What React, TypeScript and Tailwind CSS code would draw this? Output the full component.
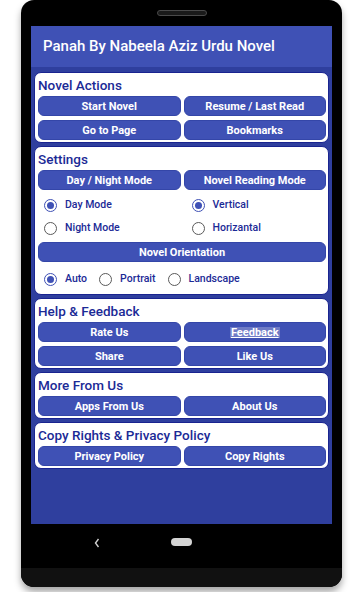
import React from "react";

const font = { fontFamily: "Roboto, 'Noto Sans', Arial, sans-serif" };

function Btn({ children, u }: { children: React.ReactNode; u?: boolean }) {
  return (
    <div className="h-[20px] rounded-[6px] bg-[#3F51B5] border border-[#3446a8] flex items-center justify-center text-white text-[11px] font-bold leading-none">
      {u ? <span className="underline bg-[#6f7bc6] px-[1px]">{children}</span> : children}
    </div>
  );
}

function Radio({ on, label, className = "" }: { on?: boolean; label: string; className?: string }) {
  return (
    <div className={"flex items-center " + className}>
      <div
        className={
          "w-[13px] h-[13px] rounded-full border-[1.5px] flex items-center justify-center shrink-0 " +
          (on ? "border-[#3F51B5]" : "border-[#5a5a5a]")
        }
      >
        {on && <div className="w-[7px] h-[7px] rounded-full bg-[#3F51B5]" />}
      </div>
      <span className="ml-[8px] text-[10.5px] font-medium text-[#1B2A96] leading-none">{label}</span>
    </div>
  );
}

function Card({ title, children }: { title: string; children: React.ReactNode }) {
  return (
    <div className="bg-white rounded-[7px] border border-[#1a2490] pl-[3px] pr-[2px] pt-[1px] pb-[2px]">
      <div className="h-[22px] leading-[22px] text-[13.5px] font-medium text-[#1B2A96]">{title}</div>
      {children}
    </div>
  );
}

export default function App() {
  return (
    <div className="w-[363px] h-[592px] bg-white overflow-hidden" style={font}>
      <div className="ml-[21px] w-[321px] h-[587px] bg-black rounded-[13px] shadow-[0_5px_7px_rgba(0,0,0,0.35)] flex flex-col overflow-hidden">
        <div className="h-[26px] flex justify-center pt-[10px]">
          <div className="w-[50px] h-[6px] rounded-full bg-[#1a1a1a] border border-[#4a4a4a]" />
        </div>
        <div className="mx-[10px] w-[301px] h-[498px] flex flex-col">
          <div className="h-[41px] bg-[#3F51B5] px-[12px] flex items-center text-white text-[15px] font-medium">
            Panah By Nabeela Aziz Urdu Novel
          </div>
          <div className="flex-1 bg-[#2F3F9E] px-[3px] pt-[5px] flex flex-col gap-[3px]">
            <Card title="Novel Actions">
              <div className="grid grid-cols-2 gap-x-[3px] gap-y-[4px]">
                <Btn>Start Novel</Btn>
                <Btn>Resume / Last Read</Btn>
                <Btn>Go to Page</Btn>
                <Btn>Bookmarks</Btn>
              </div>
            </Card>
            <Card title="Settings">
              <div className="grid grid-cols-2 gap-x-[3px]">
                <Btn>Day / Night Mode</Btn>
                <Btn>Novel Reading Mode</Btn>
              </div>
              <div className="grid grid-cols-2 gap-x-[3px] mt-[4px]">
                <Radio on label="Day Mode" className="h-[23px] pl-[6px]" />
                <Radio on label="Vertical" className="h-[23px] pl-[8px]" />
                <Radio label="Night Mode" className="h-[23px] pl-[6px]" />
                <Radio label="Horizantal" className="h-[23px] pl-[8px]" />
              </div>
              <div className="mt-[2px]">
                <Btn>Novel Orientation</Btn>
              </div>
              <div className="mt-[4px] h-[26px] flex items-center pl-[6px] gap-[12px]">
                <Radio on label="Auto" />
                <Radio label="Portrait" />
                <Radio label="Landscape" />
              </div>
            </Card>
            <Card title="Help & Feedback">
              <div className="grid grid-cols-2 gap-x-[3px] gap-y-[4px]">
                <Btn>Rate Us</Btn>
                <Btn u>Feedback</Btn>
                <Btn>Share</Btn>
                <Btn>Like Us</Btn>
              </div>
            </Card>
            <Card title="More From Us">
              <div className="grid grid-cols-2 gap-x-[3px]">
                <Btn>Apps From Us</Btn>
                <Btn>About Us</Btn>
              </div>
            </Card>
            <Card title="Copy Rights & Privacy Policy">
              <div className="grid grid-cols-2 gap-x-[3px]">
                <Btn>Privacy Policy</Btn>
                <Btn>Copy Rights</Btn>
              </div>
            </Card>
          </div>
        </div>
        <div className="h-[44px] relative">
          <svg className="absolute left-[73px] top-[14px]" width="6" height="10" viewBox="0 0 6 10">
            <path d="M4.5 1 L1.5 5 L4.5 9" stroke="#d0d0d0" strokeWidth="1.4" fill="none" />
          </svg>
          <div className="absolute left-[150px] top-[14px] w-[21px] h-[8px] rounded-full bg-[#d4d4d4]" />
        </div>
        <div className="flex-1 bg-[#111]" />
      </div>
    </div>
  );
}
